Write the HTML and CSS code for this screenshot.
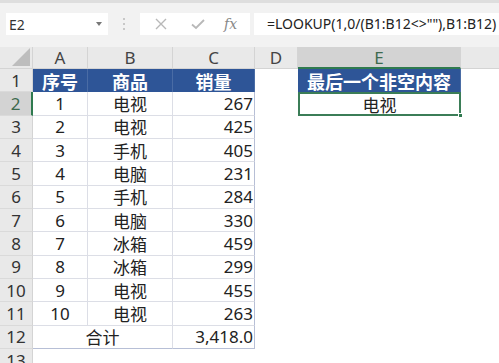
FILE: index.html
```html
<!DOCTYPE html>
<html>
<head>
<meta charset="utf-8">
<link rel="stylesheet" href="styles.css">
</head>
<body>
<div class="toolbar">
  <div class="namebox"><span>E2</span><span class="caret"></span></div>
  <div class="grip"><i></i><i></i><i></i></div>
  <div class="fxbox">
    <svg class="ico" width="14" height="14" viewBox="0 0 14 14"><path d="M2 2 L12 12 M12 2 L2 12" stroke="#b8b8b8" stroke-width="1.4" fill="none"/></svg>
    <svg class="ico" width="16" height="14" viewBox="0 0 16 14"><path d="M2 7.5 L6 11 L14 3" stroke="#b8b8b8" stroke-width="1.8" fill="none"/></svg>
    <span class="fx">fx</span>
  </div>
  <div class="formula">=LOOKUP(1,0/(B1:B12&lt;&gt;""),B1:B12)</div>
</div>
<div class="sheet">
  <div class="ch corner"><svg width="20" height="20" viewBox="0 0 20 20"><path d="M19 1 L19 19 L1 19 Z" fill="#bdbdbd"/></svg></div>
  <div class="ch">A</div>
  <div class="ch">B</div>
  <div class="ch">C</div>
  <div class="ch">D</div>
  <div class="ch sel">E</div>
  <div class="ch last"></div>

  <div class="rh">1</div>
  <div class="hd c">序号</div>
  <div class="hd c">商品</div>
  <div class="hd c colc">销量</div>
  <div class="blank"></div>
  <div class="hd c">最后一个非空内容</div>
  <div class="blank"></div>

  <div class="rh rsel">2</div>
  <div class="td c">1</div>
  <div class="td c">电视</div>
  <div class="td r colc">267</div>
  <div class="blank"></div>
  <div class="td c active">电视<span class="handle"></span></div>
  <div class="blank"></div>

  <div class="rh">3</div>
  <div class="td c">2</div><div class="td c">电视</div><div class="td r colc">425</div>
  <div class="blank"></div><div class="blank"></div><div class="blank"></div>

  <div class="rh">4</div>
  <div class="td c">3</div><div class="td c">手机</div><div class="td r colc">405</div>
  <div class="blank"></div><div class="blank"></div><div class="blank"></div>

  <div class="rh">5</div>
  <div class="td c">4</div><div class="td c">电脑</div><div class="td r colc">231</div>
  <div class="blank"></div><div class="blank"></div><div class="blank"></div>

  <div class="rh">6</div>
  <div class="td c">5</div><div class="td c">手机</div><div class="td r colc">284</div>
  <div class="blank"></div><div class="blank"></div><div class="blank"></div>

  <div class="rh">7</div>
  <div class="td c">6</div><div class="td c">电脑</div><div class="td r colc">330</div>
  <div class="blank"></div><div class="blank"></div><div class="blank"></div>

  <div class="rh">8</div>
  <div class="td c">7</div><div class="td c">冰箱</div><div class="td r colc">459</div>
  <div class="blank"></div><div class="blank"></div><div class="blank"></div>

  <div class="rh">9</div>
  <div class="td c">8</div><div class="td c">冰箱</div><div class="td r colc">299</div>
  <div class="blank"></div><div class="blank"></div><div class="blank"></div>

  <div class="rh">10</div>
  <div class="td c">9</div><div class="td c">电视</div><div class="td r colc">455</div>
  <div class="blank"></div><div class="blank"></div><div class="blank"></div>

  <div class="rh">11</div>
  <div class="td c">10</div><div class="td c">电视</div><div class="td r colc">263</div>
  <div class="blank"></div><div class="blank"></div><div class="blank"></div>

  <div class="rh">12</div>
  <div class="td c merged lastrow">合计</div><div class="td r colc lastrow">3,418.0</div>
  <div class="blank"></div><div class="blank"></div><div class="blank"></div>

  <div class="rh">13</div>
  <div class="blank"></div><div class="blank"></div><div class="blank"></div>
  <div class="blank"></div><div class="blank"></div><div class="blank"></div>
</div>
</body>
</html>
```
FILE: styles.css
```css
* { box-sizing: border-box; }
html, body { margin: 0; padding: 0; }
body {
  width: 499px;
  height: 363px;
  overflow: hidden;
  background: #fff;
  font-family: "Noto Sans", "Noto Sans CJK SC", sans-serif;
  color: #222;
}
.toolbar {
  height: 47px;
  background: #f2f2f2;
  border-top: 3px solid #dedede;
  display: flex;
  align-items: flex-start;
  padding-top: 10px;
}
.namebox {
  margin-left: 6px;
  width: 102px;
  height: 22px;
  background: #fff;
  display: flex;
  align-items: center;
  justify-content: space-between;
  padding: 0 6px 0 3px;
  font-size: 14px;
  color: #333;
}
.caret {
  width: 0; height: 0;
  border-left: 3.5px solid transparent;
  border-right: 3.5px solid transparent;
  border-top: 4px solid #777;
}
.grip {
  width: 32px;
  height: 22px;
  display: flex;
  flex-direction: column;
  align-items: center;
  justify-content: center;
  gap: 3px;
}
.grip i {
  display: block;
  width: 2px; height: 2px;
  background: #c8c8c8;
}
.fxbox {
  width: 110px;
  height: 22px;
  background: #fff;
  display: flex;
  align-items: center;
  padding-left: 14px;
  gap: 22px;
}
.fx {
  font-family: "DejaVu Serif", "Liberation Serif", serif;
  font-style: italic;
  font-size: 14px;
  color: #888;
  margin-left: -4px;
}
.formula {
  margin-left: 4px;
  flex: 1;
  height: 22px;
  background: #fff;
  padding-left: 13px;
  font-size: 14px;
  line-height: 22px;
  color: #222;
  white-space: nowrap;
  overflow: hidden;
}
.sheet {
  display: grid;
  grid-template-columns: 33px 55px 85px 82px 43px 163px 1fr;
  grid-template-rows: 22px repeat(13, 23.33px);
  font-size: 17px;
}
.ch {
  background: #e9e9e9;
  color: #444;
  display: flex;
  align-items: center;
  justify-content: center;
  border-right: 1px solid #d4d4d4;
  border-bottom: 1px solid #d4d4d4;
  line-height: 1;
}
.ch.corner { justify-content: flex-end; padding-right: 1px; align-items: flex-end; padding-bottom: 1px; }
.ch.sel { background: #d3d3d3; color: #3d6a4e; border-bottom: 2px solid #2f7a4f; }
.ch.last { border-right: none; }
.rh {
  background: #e9e9e9;
  color: #333;
  display: flex;
  align-items: center;
  justify-content: center;
  border-right: 1px solid #d4d4d4;
  border-bottom: 1px solid #dadada;
}
.rh.rsel { background: #d3d3d3; color: #3d6a4e; border-right: 2px solid #2f7a4f; }
.hd {
  background: #2e5597;
  color: #fff;
  font-weight: bold;
  font-size: 18px;
  border-right: 1px solid #4a6ca5;
  display: flex;
  align-items: center;
  justify-content: center;
  white-space: nowrap;
}
.td {
  display: flex;
  align-items: center;
  border-right: 1px solid #dcdee6;
  border-bottom: 1px solid #dcdee6;
  color: #222;
  white-space: nowrap;
}
.c { justify-content: center; }
.r { justify-content: flex-end; padding-right: 1px; }
.td.colc { border-right: 1px solid #b7bfd6; }
.td.lastrow { border-bottom: 1px solid #b7bfd6; }
.merged { grid-column: span 2; }
.blank { background: #fff; }
.active {
  position: relative;
  border: 2px solid #3b7d57;
}
.handle {
  position: absolute;
  right: -4px;
  bottom: -4px;
  width: 5px;
  height: 5px;
  background: #2f7a4f;
  border: 1px solid #fff;
}
```
